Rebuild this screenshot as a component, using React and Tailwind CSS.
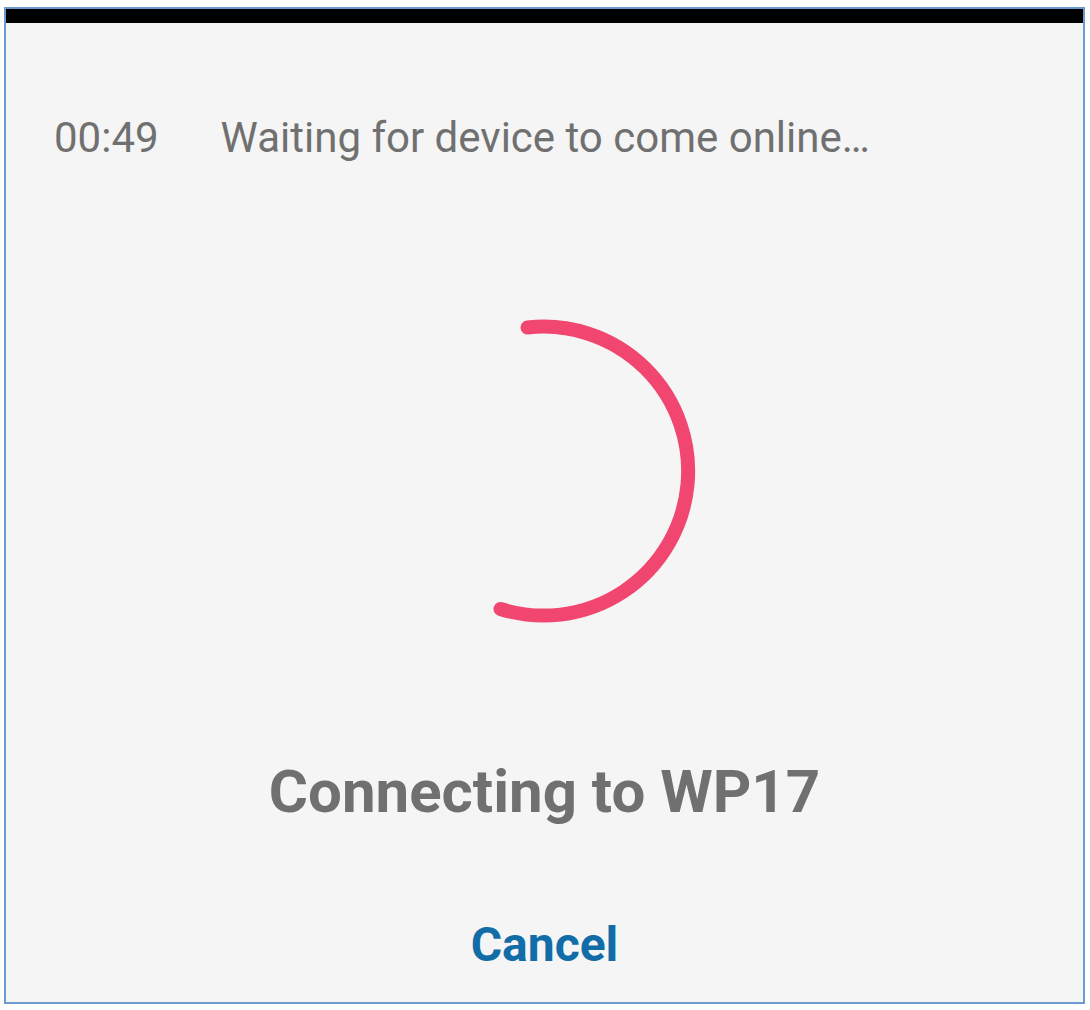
export default function App() {
  return (
    <div className="w-[1090px] h-[1010px] bg-white pt-[7px] pl-[4px]" style={{ fontFamily: "Roboto, 'Liberation Sans', sans-serif" }}>
      <div className="w-[1081px] h-[997px] border-2 border-[#6b9bcf] bg-[#f5f5f5] flex flex-col">
        <div className="h-[14px] bg-black" />

        <div className="mt-[94px] pl-[48px] flex items-center text-[42px] leading-none text-[#707070]">
          <span>00:49</span>
          <span className="ml-[62px]">Waiting for device to come online…</span>
        </div>

        <div className="mt-[157px] flex justify-center">
          <svg width="310" height="310" viewBox="0 0 310 310" fill="none">
            <path
              d="M 137.5 11.5 A 144.5 144.5 0 1 1 110.5 293"
              stroke="#f0466f"
              strokeWidth="14"
              strokeLinecap="round"
            />
          </svg>
        </div>

        <h1 className="mt-[136px] text-center text-[60px] font-bold leading-none text-[#707070]">
          Connecting to WP17
        </h1>

        <div className="mt-[99px] flex justify-center">
          <button className="text-[48px] font-bold leading-none text-[#116ca8]">Cancel</button>
        </div>
      </div>
    </div>
  );
}
